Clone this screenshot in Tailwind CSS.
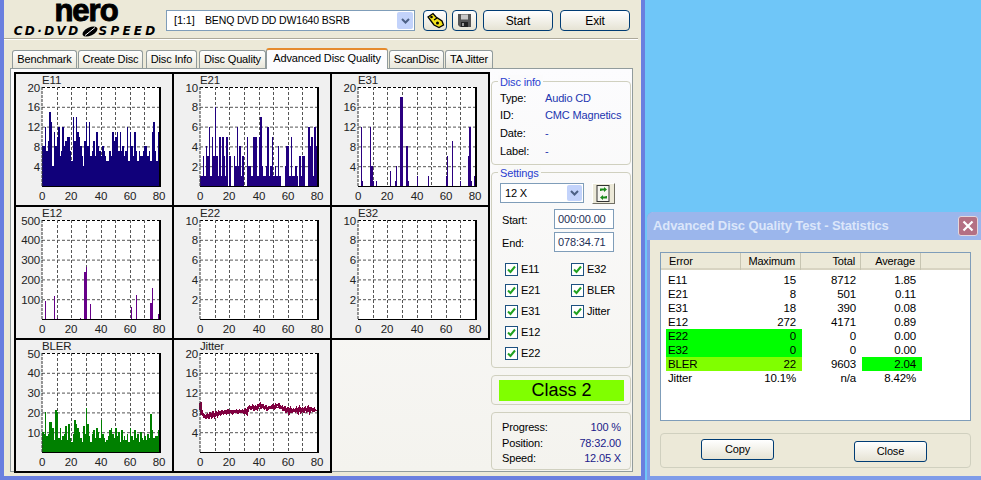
<!DOCTYPE html>
<html lang="en">
<head>
    <meta charset="UTF-8" />
    <title>Nero CD-DVD Speed</title>
    <script src="https://cdn.jsdelivr.net/npm/@tailwindcss/browser@4"></script>
</head>
<body class="relative w-[981px] h-[480px] overflow-hidden bg-[#6fc6f8] font-['Liberation_Sans',sans-serif] text-[11px] tracking-[-0.15px] text-black">

    <!-- main window -->
    <div class="absolute left-0 top-0 w-[645px] h-[480px] bg-[#ece9d8] border-l-4 border-r-4 border-b-4 border-[#6a7fdf]">
        <div class="flex h-[38px]">
            <div class="w-[162px] pl-[2px] flex flex-col items-center">
                <div class="text-[31px] leading-[20px] h-[26px] pt-[1px] font-bold tracking-[-1px] [-webkit-text-stroke:1px_black]">nero</div>
                <div class="flex items-center h-[10px] font-['DejaVu_Sans',sans-serif] font-bold italic text-[12px] leading-none">
                    <span class="tracking-[2.4px]">CD·DVD</span>
                    <svg width="16" height="11" viewBox="0 0 16 11" class="mx-[1px]"><ellipse cx="8" cy="5.5" rx="8" ry="4" transform="rotate(-25 8 5.5)" fill="#000"/><path d="M3 9.5 L13 1.5" stroke="#fff" stroke-width="1"/></svg>
                    <span class="tracking-[3.2px]">SPEED</span>
                </div>
            </div>
            <div class="flex pt-[10px]">
                <div class="flex items-center w-[249px] h-[21px] bg-white border border-[#7f9db9] pl-[7px] pr-[1px] text-[11px]">
                    <span class="w-[31px]">[1:1]</span>
                    <span class="flex-1 text-[10.5px]">BENQ DVD DD DW1640 BSRB</span>
                    <span class="flex items-center justify-center w-[16px] h-[17px] bg-[#c3d3fb] rounded-[2px]">
                        <svg width="9" height="6" viewBox="0 0 9 6"><path d="M1 1 L4.5 4.5 L8 1" fill="none" stroke="#4d6185" stroke-width="2"/></svg>
                    </span>
                </div>
                <button class="flex items-center justify-center ml-[8px] w-[24px] h-[21px] border border-[#003c74] rounded-[4px] bg-linear-to-b from-white to-[#e6e3d4]">
                    <svg width="20" height="17" viewBox="0 0 20 17"><path d="M3 5 L8 1.5 L11 5 L17 9 L18.5 13 L14 15.5 L9 13 L6 9 Z" fill="#f2e21b" stroke="#000" stroke-width="1.3"/><circle cx="6.5" cy="5" r="1.3" fill="#000"/><circle cx="12.5" cy="11" r="1.5" fill="#000"/><path d="M9 8 L12 6" stroke="#000" stroke-width="1.4"/></svg>
                </button>
                <button class="flex items-center justify-center ml-[5px] w-[25px] h-[21px] border border-[#003c74] rounded-[4px] bg-linear-to-b from-white to-[#e6e3d4]">
                    <svg width="15" height="15" viewBox="0 0 15 15"><path d="M1 1 H14 V14 H3 L1 12 Z" fill="#555"/><rect x="4" y="1.5" width="7" height="5" fill="#c8c8c8"/><rect x="4" y="9" width="7" height="5" fill="#222"/><rect x="5" y="10" width="2" height="3" fill="#999"/></svg>
                </button>
                <button class="ml-[6px] w-[70px] h-[21px] border border-[#003c74] rounded-[4px] bg-linear-to-b from-white to-[#e6e3d4] text-[12px]">Start</button>
                <button class="ml-[7px] w-[70px] h-[21px] border border-[#003c74] rounded-[4px] bg-linear-to-b from-white to-[#e6e3d4] text-[12px]">Exit</button>
            </div>
        </div>
        <div class="w-[634px] h-[2px] border-t border-b border-t-[#aca899] border-b-white"></div>

        <!-- tabs -->
        <div class="flex items-end h-[20px] mt-[8px] ml-[8px] text-[11px]">
            <div class="flex items-center justify-center w-[65px] h-[18px] border border-b-0 border-[#919b9c] rounded-t-[3px] bg-linear-to-b from-white to-[#e9e7da]">Benchmark</div>
            <div class="flex items-center justify-center w-[65px] h-[18px] ml-[1px] border border-b-0 border-[#919b9c] rounded-t-[3px] bg-linear-to-b from-white to-[#e9e7da]">Create Disc</div>
            <div class="flex items-center justify-center w-[51px] h-[18px] ml-[3px] border border-b-0 border-[#919b9c] rounded-t-[3px] bg-linear-to-b from-white to-[#e9e7da]">Disc Info</div>
            <div class="flex items-center justify-center w-[67px] h-[18px] ml-[2px] border border-b-0 border-[#919b9c] rounded-t-[3px] bg-linear-to-b from-white to-[#e9e7da]">Disc Quality</div>
            <div class="relative z-10 flex items-center justify-center w-[122px] h-[21px] -mb-[1px] border border-b-0 border-[#919b9c] border-t-2 border-t-[#e68b2c] rounded-t-[3px] bg-[#fcfcfe] pb-[3px]">Advanced Disc Quality</div>
            <div class="flex items-center justify-center w-[55px] h-[18px] ml-[1px] border border-b-0 border-[#919b9c] rounded-t-[3px] bg-linear-to-b from-white to-[#e9e7da]">ScanDisc</div>
            <div class="flex items-center justify-center w-[48px] h-[18px] ml-[1px] border border-b-0 border-[#919b9c] rounded-t-[3px] bg-linear-to-b from-white to-[#e9e7da]">TA Jitter</div>
        </div>

        <!-- tab page -->
        <div class="flex w-[623px] h-[404px] ml-[6px] border border-[#919b9c] bg-linear-to-b from-[#fcfcfe] to-[#f4f3ee]">
            <div id="charts" class="grid grid-cols-[158px_158px_158px] grid-rows-[133px_133px_133px] w-[476px] ml-[3px] mt-[3px]"></div>

            <div class="flex flex-col gap-[7px] w-[140px] ml-[1px] mt-[12px]">
                <div class="relative h-[84px] border border-[#d0d0bf] rounded-[4px] pt-[7px] pl-[8px]">
                    <span class="absolute left-[6px] -top-[7px] px-[2px] bg-[#fbfbfc] text-[#2a3fd0] leading-[14px]">Disc info</span>
                    <div class="grid grid-cols-[45px_1fr] auto-rows-[17.7px] items-center">
                        <span>Type:</span><span class="text-[#2236b0]">Audio CD</span>
                        <span>ID:</span><span class="text-[#2236b0]">CMC Magnetics</span>
                        <span>Date:</span><span class="text-[#2236b0]">-</span>
                        <span>Label:</span><span class="text-[#2236b0]">-</span>
                    </div>
                </div>

                <div class="relative h-[196px] border border-[#d0d0bf] rounded-[4px] pt-[10px]">
                    <span class="absolute left-[6px] -top-[7px] px-[2px] bg-[#f9f9f7] text-[#2a3fd0] leading-[14px]">Settings</span>
                    <div class="flex ml-[8px]">
                        <div class="flex items-center w-[84px] h-[20px] bg-white border border-[#7f9db9] pl-[4px] pr-[1px]">
                            <span class="flex-1">12 X</span>
                            <span class="flex items-center justify-center w-[15px] h-[16px] bg-[#c3d3fb] rounded-[2px]">
                                <svg width="9" height="6" viewBox="0 0 9 6"><path d="M1 1 L4.5 4.5 L8 1" fill="none" stroke="#4d6185" stroke-width="2"/></svg>
                            </span>
                        </div>
                        <button class="flex items-center justify-center ml-[8px] w-[23px] h-[21px] border border-t-white border-l-white border-r-[#716f64] border-b-[#716f64] bg-[#ece9d8]">
                            <svg width="15" height="17" viewBox="0 0 15 17"><rect x="1" y="0.5" width="12" height="16" fill="#f6f6f0" stroke="#333"/><path d="M4 6 V3.5 H8 V2 L11 4.5 L8 7 V5.5 H5.5 V6 Z" fill="#1a8a1a"/><path d="M11 11 V13.5 H7 V15 L4 12.5 L7 10 V11.5 H9.5 V11 Z" fill="#1a8a1a"/></svg>
                        </button>
                    </div>
                    <div class="flex items-center ml-[10px] mt-[5px]">
                        <span class="w-[52px] pt-[3px]">Start:</span>
                        <div class="w-[60px] h-[20px] pl-[3px] leading-[18px] bg-white border border-[#7f9db9] text-[#1d2f55]">000:00.00</div>
                    </div>
                    <div class="flex items-center ml-[10px] mt-[3px]">
                        <span class="w-[52px] pt-[3px]">End:</span>
                        <div class="w-[60px] h-[20px] pl-[3px] leading-[18px] bg-white border border-[#7f9db9] text-[#1d2f55]">078:34.71</div>
                    </div>
                    <div id="checks" class="grid grid-rows-[21px_21px_21px_21px_21px] grid-cols-[66px_66px] grid-flow-col items-center ml-[13px] mt-[7px]"></div>
                </div>

                <div class="h-[30px] border border-[#d0d0bf] rounded-[4px] pt-[4px] pl-[7px]">
                    <div class="flex items-center justify-center w-[125px] h-[21px] bg-[#80ff00] text-[18px] tracking-normal">Class 2</div>
                </div>

                <div class="h-[58px] border border-[#d0d0bf] rounded-[4px] pl-[10px] pr-[9px] pt-[5px]">
                    <div class="flex justify-between h-[18px] items-center"><span>Progress:</span><span class="text-[#20208a]">100 %</span></div>
                    <div class="flex justify-between h-[15px] items-center"><span>Position:</span><span class="text-[#20208a]">78:32.00</span></div>
                    <div class="flex justify-between h-[14px] items-center"><span>Speed:</span><span class="text-[#20208a]">12.05 X</span></div>
                </div>
            </div>
        </div>
    </div>

    <!-- statistics window -->
    <div class="absolute left-[647px] top-[212px] w-[340px] h-[268px] bg-[#ece9d8] border-l-[3px] border-b-4 border-[#7f9ce8] rounded-t-[6px]">
        <div class="flex items-center justify-between h-[28px] -ml-[3px] pl-[6px] pr-[9px] bg-[#9bb6ec] rounded-t-[6px]">
            <span class="text-[#dbe6fa] font-bold text-[13px] tracking-[-0.1px]">Advanced Disc Quality Test - Statistics</span>
            <span class="flex items-center justify-center w-[20px] h-[20px] rounded-[3px] border border-[#e4d6dc] bg-[#b47083]">
                <svg width="12" height="12" viewBox="0 0 12 12"><path d="M1.5 1.5 L10.5 10.5 M10.5 1.5 L1.5 10.5" stroke="#fff" stroke-width="2.2"/></svg>
            </span>
        </div>

        <div class="w-[311px] h-[169px] ml-[10px] mt-[12px] bg-white border border-[#7f9db9]">
            <div class="grid grid-cols-[80px_60px_60px_60px] h-[17px] bg-[#ece9d8] border-b-2 border-[#d8d4c2] items-center">
                <span class="pl-[8px] border-r border-[#c7c5b2]">Error</span>
                <span class="pr-[5px] text-right border-r border-[#c7c5b2]">Maximum</span>
                <span class="pr-[5px] text-right border-r border-[#c7c5b2]">Total</span>
                <span class="pr-[5px] text-right border-r border-[#c7c5b2]">Average</span>
            </div>
            <div id="rows" class="ml-[5px] mt-[3px]"></div>
        </div>

        <div class="relative w-[311px] h-[35px] ml-[10px] mt-[12px] border border-[#d0d0bf] rounded-[4px]">
            <button class="absolute left-[40px] top-[5px] w-[73px] h-[21px] border border-[#003c74] rounded-[3px] bg-linear-to-b from-white to-[#e6e3d4]">Copy</button>
            <button class="absolute left-[193px] top-[7px] w-[73px] h-[21px] border border-[#003c74] rounded-[3px] bg-linear-to-b from-white to-[#e6e3d4]">Close</button>
        </div>
    </div>

    <script>
        // bar heights read off the graphs, one value per minute of the disc
        const e11 = [8,8,12,7,9,15,13,4,11,8,10,12,6,7,12,8,9,10,10,7,5,14,9,14,11,10,8,6,4,9,13,8,13,6,7,9,6,11,8,7,6,8,7,6,5,5,7,6,11,9,10,11,7,11,7,8,6,7,12,5,11,8,6,11,7,5,7,6,6,7,8,8,6,7,5,11,13,7,5,11];
        const e21 = [1,1,3,1,4,3,6,1,5,3,8,3,1,5,1,5,3,1,5,0,3,0,0,3,2,6,2,4,1,3,0,0,5,2,2,1,5,5,5,1,5,7,2,1,1,2,6,1,2,5,1,2,1,4,1,0,0,0,2,4,4,1,5,1,1,2,1,0,3,1,3,3,0,0,6,4,5,1,6,4];
        const e31 = {2:12,3:1,8:12,9:4,10:1,12:1,22:3,25:1,26:4,29:18,30:18,33:8,34:1,40:2,48:2,60:2,61:6,64:9,70:1,75:6,76:12,77:1,79:2};
        const e12 = {2:90,8:115,10:5,26:5,29:235,30:265,33:75,61:60,64:120,74:80,75:155,79:25};
        const bler = [10,9,20,8,9,15,15,12,6,21,20,7,12,6,8,9,13,6,14,7,5,9,16,14,12,10,7,5,13,9,22,14,8,5,9,11,7,12,10,7,16,9,7,5,6,8,11,12,9,7,12,8,10,5,11,6,8,6,9,5,12,8,6,11,7,9,5,10,7,6,8,6,9,7,19,11,7,8,8,11];
        const jitter = [10,7.8,7.6,7.2,7,7.4,7,7.6,7.2,7.8,7.3,7.9,7.5,8,7.7,8.1,7.9,8.2,7.9,8.3,8,8.2,7.9,8.2,8.1,8.3,8,8.3,8.1,8.3,8,8.4,7.9,8.9,9.1,8.8,9.2,8.7,9,8.8,9.4,9.6,9,9.3,8.9,9.2,8.6,8.9,9.1,9,9.3,8.9,9.4,9.2,9.5,9,9.1,8.6,8.9,8.3,8.7,8,8.6,8.2,8.5,8.3,8.7,8.1,8.8,8.2,8.6,8.3,8.8,8.4,8.9,8.2,8.7,8.4,8.6,8.2];

        const charts = [
            { name: 'E11', max: 20, ticks: [20,16,12,8,4], color: '#10007a', bars: e11 },
            { name: 'E21', max: 10, ticks: [10,8,6,4,2], color: '#20007f', bars: e21 },
            { name: 'E31', max: 20, ticks: [20,16,12,8,4], color: '#2b0080', sparse: e31 },
            { name: 'E12', max: 500, ticks: [500,400,300,200,100], color: '#660088', sparse: e12 },
            { name: 'E22', max: 10, ticks: [10,8,6,4,2], color: '#000' },
            { name: 'E32', max: 10, ticks: [10,8,6,4,2], color: '#000' },
            { name: 'BLER', max: 50, ticks: [50,40,30,20,10], color: '#008000', bars: bler },
            { name: 'Jitter', max: 20, ticks: [20,16,12,8,4], color: '#800040', line: jitter }
        ];

        const L = 26, T = 13, W = 117, H = 99;

        function chartSvg(c) {
            let s = '<svg width="156" height="131" font-size="11.5" fill="#222">';
            s += `<text x="${L}" y="9.5">${c.name}</text>`;
            s += `<rect x="${L}" y="${T}" width="${W}" height="${H}" fill="#fff"/>`;
            c.ticks.forEach((t, i) => {
                const y = T + i * H / 5;
                s += `<line x1="${L}" x2="${L + W}" y1="${y + .5}" y2="${y + .5}" stroke="${i ? '#555' : '#000'}" stroke-dasharray="3 2"/>`;
                s += `<text x="${L - 2}" y="${y + 4.5}" text-anchor="end">${t}</text>`;
            });
            for (let i = 0; i <= 8; i++) {
                const x = Math.round(L + i * W / 8);
                if (i > 0 && i < 8) s += `<line x1="${x + .5}" x2="${x + .5}" y1="${T}" y2="${T + H}" stroke="#555" stroke-dasharray="3 2"/>`;
                if (i % 2 == 0) s += `<text x="${x}" y="${T + H + 14}" text-anchor="middle">${i * 10}</text>`;
            }
            const step = W / 80, unit = H / c.max;
            if (c.bars) {
                c.bars.forEach((v, i) => {
                    if (v) s += `<rect x="${L + i * step}" y="${T + H - v * unit}" width="${step + .1}" height="${v * unit}" fill="${c.color}" shape-rendering="crispEdges"/>`;
                });
            }
            if (c.sparse) {
                Object.keys(c.sparse).forEach(k => {
                    const v = c.sparse[k], x = Math.round(L + k * step);
                    const w = c.sparse[+k + 1] ? Math.round(L + (+k + 1) * step) - x : 1;
                    s += `<rect x="${x}" y="${T + H - v * unit}" width="${w}" height="${v * unit}" fill="${c.color}" shape-rendering="crispEdges"/>`;
                });
            }
            if (c.line) {
                const pts = c.line.map((v, i) => (L + i * step).toFixed(1) + ',' + (T + H - v * unit).toFixed(1)).join(' ');
                s += `<polyline points="${pts}" fill="none" stroke="${c.color}" stroke-width="3" shape-rendering="crispEdges"/>`;
            }
            s += `<line x1="${L}" x2="${L}" y1="${T}" y2="${T + H}" stroke="#333" stroke-dasharray="3 1"/>`;
            s += `<line x1="${L}" x2="${L + W}" y1="${T + H + .5}" y2="${T + H + .5}" stroke="#000"/>`;
            s += `<line x1="${L + W + 1}" x2="${L + W + 1}" y1="${T}" y2="${T + H + 1}" stroke="#000" stroke-width="2"/>`;
            return s + '</svg>';
        }

        const box = document.getElementById('charts');
        charts.forEach(c => {
            const cell = document.createElement('div');
            cell.className = 'w-[160px] h-[135px] border-2 border-black bg-[#f0f0f0]';
            cell.innerHTML = chartSvg(c);
            box.appendChild(cell);
        });

        const checks = ['E11','E21','E31','E12','E22','E32','BLER','Jitter'];
        document.getElementById('checks').innerHTML = checks.map(n =>
            `<div class="flex items-center gap-[3px]"><span class="flex items-center justify-center w-[13px] h-[13px] bg-white border border-[#1c5180]"><svg width="9" height="9" viewBox="0 0 9 9"><path d="M1 4.5 L3.5 7 L8 1.5" fill="none" stroke="#21a121" stroke-width="2"/></svg></span><span>${n}</span></div>`
        ).join('');

        const rows = [
            ['E11','15','8712','1.85'],
            ['E21','8','501','0.11'],
            ['E31','18','390','0.08'],
            ['E12','272','4171','0.89'],
            ['E22','0','0','0.00','bg-[#00ff00]'],
            ['E32','0','0','0.00','bg-[#00ff00]'],
            ['BLER','22','9603','2.04','bg-[#80ff00]','bg-[#00ff00]'],
            ['Jitter','10.1%','n/a','8.42%']
        ];
        document.getElementById('rows').innerHTML = rows.map(r =>
            `<div class="grid grid-cols-[136px_60px_60px] w-[256px] h-[14px] leading-[14px] text-[11.5px]">
                <div class="flex justify-between pl-[2px] pr-[6px] ${r[4] || ''}"><span>${r[0]}</span><span>${r[1]}</span></div>
                <div class="pr-[6px] text-right">${r[2]}</div>
                <div class="pr-[6px] text-right ${r[5] || ''}">${r[3]}</div>
            </div>`
        ).join('');
    </script>
</body>
</html>
